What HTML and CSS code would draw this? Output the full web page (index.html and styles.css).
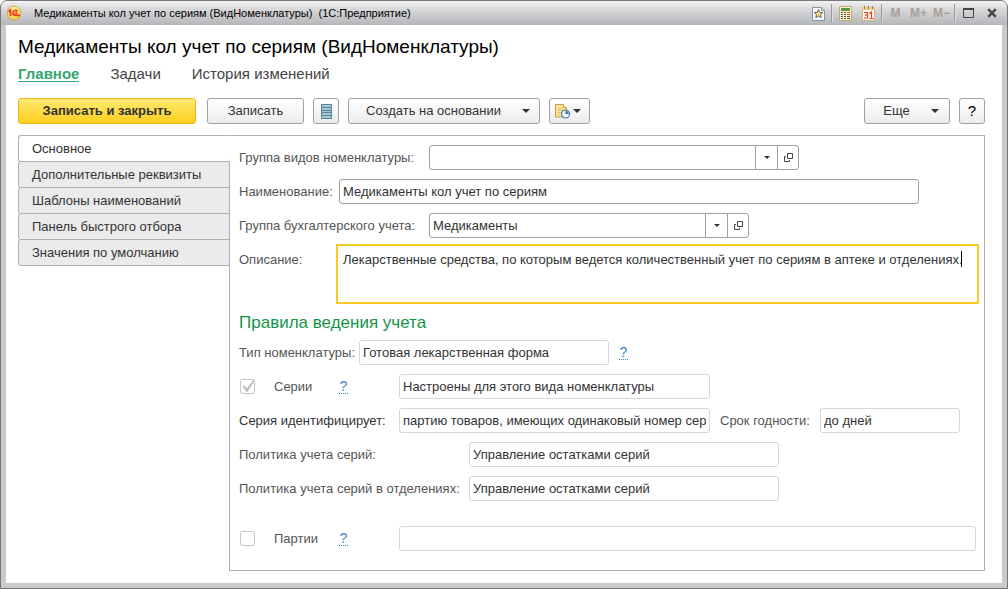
FILE: index.html
```html
<!DOCTYPE html>
<html lang="ru">
<head>
<meta charset="utf-8">
<title>Медикаменты кол учет по сериям (ВидНоменклатуры)</title>
<link rel="stylesheet" href="styles.css">
</head>
<body>
<div class="window">
  <header class="titlebar">
    <svg class="logo" width="16" height="16" viewBox="0 0 16 16" aria-hidden="true">
      <defs><linearGradient id="gold" x1="0" y1="0" x2="0" y2="1"><stop offset="0" stop-color="#fff0a0"/><stop offset="1" stop-color="#f5cd45"/></linearGradient></defs>
      <circle cx="8" cy="8" r="7" fill="url(#gold)" stroke="#d2a24a"/>
      <path d="M2.500 6.500 4.500 5v6M11.500 6.200C10.500 4.800 7 5 7 8c0 2 1.500 2.300 3 2.300H14M11.300 8.200H9.200" fill="none" stroke="#e33422" stroke-width="1.700"/>
    </svg>
    <span class="caption">Медикаменты кол учет по сериям (ВидНоменклатуры)&nbsp; (1С:Предприятие)</span>
    <div class="tools">
      <button class="tool" type="button" aria-label="Избранное">
        <svg width="13" height="15" viewBox="0 0 13 15"><path d="M.5 1.500h9l3 3v10H.5z" fill="#f6f9fc" stroke="#7f97aa"/><path d="M9.500 1.500v3h3" fill="#dce6ee" stroke="#7f97aa"/><path d="m6.500 3.500 1.200 2.800 3 .3-2.200 2 .7 3-2.700-1.600-2.700 1.600.7-3-2.200-2 3-.3z" fill="#ffd78a" stroke="#5d5346" stroke-width=".9"/></svg>
      </button>
      <i class="sep"></i>
      <button class="tool" type="button" aria-label="Калькулятор">
        <svg width="13" height="15" viewBox="0 0 13 15"><path d="M.5.5h12v14H.5z" fill="#fdf0cc" stroke="#c3ab77"/><path d="M2 2h9v3H2z" fill="#5c9448"/><path d="M2 6h2v1H2zm3 0h2v1H5zM2 8h2v1H2zm3 0h2v1H5zm-3 2h2v1H2zm3 0h2v1H5zm-3 2h2v1H2zm3 0h2v1H5zm3-2h3v1H8zm0 2h3v1H8z" fill="#4f5845"/><path d="M8 6h3v1H8zm0 2h3v1H8z" fill="#e05435"/></svg>
      </button>
      <button class="tool" type="button" aria-label="Календарь">
        <svg width="13" height="15" viewBox="0 0 13 15"><path d="M.5 1.500h12v13H.5z" fill="#fdf6ec" stroke="#d3b47a"/><path d="M0 1h13v3H0z" fill="#eccb85"/><path d="M2 0h1v3H2zm4 0h1v3H6zm4 0h1v3h-1z" fill="#9e7a39"/><path d="M2 6.500h3.500v5.500H2M3 9.200h2.500M7.500 7.500l2-1.500v6M7.500 12.500h4" fill="none" stroke="#ee4423" stroke-width="1.200"/></svg>
      </button>
      <i class="sep"></i>
      <button class="tool mem" type="button">M</button>
      <button class="tool mem" type="button">M+</button>
      <button class="tool mem" type="button">M−</button>
      <i class="sep"></i>
      <button class="tool" type="button" aria-label="Развернуть">
        <svg width="11" height="10" viewBox="0 0 11 10"><path d="M.5.5h10v9H.5z" fill="none" stroke="#444"/><path d="M0 0h11v2H0z" fill="#444"/></svg>
      </button>
      <button class="tool" type="button" aria-label="Закрыть">
        <svg width="10" height="10" viewBox="0 0 10 10"><path d="m1.200 1.200 7.600 7.600M8.800 1.200 1.200 8.800" stroke="#444" stroke-width="2.400"/></svg>
      </button>
    </div>
  </header>

  <main class="content">
    <h1 class="title">Медикаменты кол учет по сериям (ВидНоменклатуры)</h1>
    <nav class="nav">
      <a class="nav-link active" href="#">Главное</a>
      <a class="nav-link" href="#">Задачи</a>
      <a class="nav-link" href="#">История изменений</a>
    </nav>

    <div class="toolbar">
      <button class="btn btn-primary" type="button">Записать и закрыть</button>
      <button class="btn btn-save" type="button">Записать</button>
      <button class="btn btn-icon" type="button" aria-label="Список">
        <svg width="11" height="15" viewBox="0 0 11 15"><path d="M0 0h11v15H0z" fill="#5f8798"/><path d="M1 1h9v2H1zm0 3h9v2H1zm0 3h9v1H1zm0 2h9v2H1zm0 3h9v2H1z" fill="#a5c7d3"/></svg>
      </button>
      <button class="btn btn-create" type="button"><span>Создать на основании</span><i class="caret"></i></button>
      <button class="btn btn-report" type="button" aria-label="Отчеты">
        <svg width="16" height="15" viewBox="0 0 16 15"><path d="M.5.5h8l3 3v9.500H.5z" fill="#ffe69a" stroke="#c29e4b"/><path d="M8.500.5v3h3" fill="#fff5d0" stroke="#c29e4b"/><path d="M2.500 4.500h5m-5 2h6m-6 2h3m-3 2h2" stroke="#dfbd68"/><circle cx="10.500" cy="10" r="4" fill="#f4f9ff" stroke="#3e78ae" stroke-width="1.200"/><path d="M10.500 10V6.800a3.200 3.200 0 0 1 3.200 3.200z" fill="#3e78ae"/></svg>
        <i class="caret"></i>
      </button>
      <button class="btn btn-more" type="button"><span>Еще</span><i class="caret"></i></button>
      <button class="btn btn-icon btn-help" type="button">?</button>
    </div>

    <div class="body">
      <div class="tabs" role="tablist">
        <button class="tab selected" type="button" role="tab" aria-selected="true">Основное</button>
        <button class="tab" type="button" role="tab">Дополнительные реквизиты</button>
        <button class="tab" type="button" role="tab">Шаблоны наименований</button>
        <button class="tab" type="button" role="tab">Панель быстрого отбора</button>
        <button class="tab" type="button" role="tab">Значения по умолчанию</button>
      </div>

      <form class="panel">
        <div class="row">
          <label class="label w-190" for="group">Группа видов номенклатуры:</label>
          <div class="combo w-370">
            <input class="combo-input" id="group" type="text">
            <button class="combo-btn" type="button" aria-label="Выбрать"><i class="caret small"></i></button>
            <button class="combo-btn open" type="button" aria-label="Открыть"><svg width="9" height="9" viewBox="0 0 9 9"><path d="M3.500.5h5v5h-5zM2 3.500H.5v5h5V7" fill="none" stroke="#444"/></svg></button>
          </div>
        </div>
        <div class="row">
          <label class="label w-100" for="name">Наименование:</label>
          <input class="field w-580" id="name" type="text" value="Медикаменты кол учет по сериям">
        </div>
        <div class="row">
          <label class="label w-190" for="account">Группа бухгалтерского учета:</label>
          <div class="combo w-320">
            <input class="combo-input" id="account" type="text" value="Медикаменты">
            <button class="combo-btn" type="button" aria-label="Выбрать"><i class="caret small"></i></button>
            <button class="combo-btn open" type="button" aria-label="Открыть"><svg width="9" height="9" viewBox="0 0 9 9"><path d="M3.500.5h5v5h-5zM2 3.500H.5v5h5V7" fill="none" stroke="#444"/></svg></button>
          </div>
        </div>
        <div class="row row-area">
          <label class="label" for="desc">Описание:</label>
          <div class="area-wrap">
            <textarea class="area" id="desc">Лекарственные средства, по которым ведется количественный учет по сериям в аптеке и отделениях.</textarea>
            <i class="cursor"></i>
          </div>
        </div>

        <h2 class="section">Правила ведения учета</h2>

        <div class="row">
          <label class="label w-120" for="type">Тип номенклатуры:</label>
          <input class="field ro w-250" id="type" type="text" readonly value="Готовая лекарственная форма">
          <a class="hint" href="#">?</a>
        </div>
        <div class="row">
          <div class="check-group">
            <input class="check" id="series" type="checkbox" checked disabled>
            <label class="check-label" for="series">Серии</label>
            <a class="hint" href="#">?</a>
          </div>
          <input class="field ro w-311" type="text" readonly aria-label="Настройка серий" value="Настроены для этого вида номенклатуры">
        </div>
        <div class="row">
          <label class="label dark w-160" for="ident">Серия идентифицирует:</label>
          <input class="field ro w-311" id="ident" type="text" readonly value="партию товаров, имеющих одинаковый номер серии">
          <label class="label w-100 label-next" for="expiry">Срок годности:</label>
          <input class="field ro w-140" id="expiry" type="text" readonly value="до дней">
        </div>
        <div class="row">
          <label class="label w-230" for="policy">Политика учета серий:</label>
          <input class="field ro w-310" id="policy" type="text" readonly value="Управление остатками серий">
        </div>
        <div class="row">
          <label class="label w-230" for="policy-dep">Политика учета серий в отделениях:</label>
          <input class="field ro w-310" id="policy-dep" type="text" readonly value="Управление остатками серий">
        </div>
        <div class="row row-batches">
          <div class="check-group">
            <input class="check" id="batches" type="checkbox" disabled>
            <label class="check-label" for="batches">Партии</label>
            <a class="hint" href="#">?</a>
          </div>
          <input class="field ro grow" type="text" readonly aria-label="Настройка партий">
        </div>
      </form>
    </div>
  </main>
</div>
</body>
</html>
```
FILE: styles.css
```css
* { box-sizing: border-box; }

body {
  margin: 0;
  background: #fff;
  color: #333;
  font: 13px/16px "Liberation Sans", Arial, sans-serif;
}

button, input, textarea {
  margin: 0;
  color: inherit;
  font: inherit;
}

.window {
  display: flex;
  flex-direction: column;
  min-height: 100vh;
  padding: 0 5px 5px;
  border: 1px solid #77777a;
  border-radius: 7px 7px 0 0;
  background: #c9cacc;
}

/* Title bar */
.titlebar {
  display: flex;
  align-items: center;
  height: 24px;
  margin: 0 -5px;
  padding: 0 4px 0 5px;
  border-radius: 6px 6px 0 0;
  background: linear-gradient(#f2f2f3, #d8d8da 35%, #b5b6b9);
}

.caption {
  flex: 1;
  margin-left: 12px;
  overflow: hidden;
  color: #000;
  font-size: 11px;
  white-space: nowrap;
}

.tools { display: flex; align-items: center; }

.tool {
  display: flex;
  align-items: center;
  justify-content: center;
  width: 23px;
  height: 20px;
  padding: 0;
  border: 0;
  background: none;
}

.mem { color: #a89f98; font-size: 12px; font-weight: bold; }

.sep {
  width: 2px;
  height: 18px;
  margin: 0 1px;
  border-left: 1px solid #98999b;
  border-right: 1px solid #dedede;
}

/* Page head */
.content {
  flex: 1;
  padding: 12px 17px 12px 12px;
  background: #fff;
}

.title {
  margin: 0;
  color: #000;
  font-size: 19px;
  font-weight: normal;
  line-height: 20px;
}

.nav {
  display: flex;
  gap: 31px;
  margin-top: 8px;
  font-size: 15px;
  line-height: 18px;
}

.nav-link { color: #444; text-decoration: none; }

.nav-link.active {
  height: 17px;
  border-bottom: 1px solid #35a873;
  color: #35a873;
  font-weight: bold;
}

/* Command bar */
.toolbar { display: flex; gap: 9px; margin-top: 15px; }

.btn {
  display: flex;
  align-items: center;
  justify-content: center;
  height: 26px;
  padding: 0;
  border: 1px solid #a0a0a0;
  border-radius: 3px;
  background: linear-gradient(#fff, #ececec);
  white-space: nowrap;
}

.btn-primary {
  width: 178px;
  margin-right: 2px;
  border-color: #e8b51a;
  background: linear-gradient(#ffe970, #fccf1e);
  font-weight: bold;
}

.btn-save { width: 97px; }
.btn-icon { width: 26px; }
.btn-create { gap: 21px; width: 192px; padding-left: 8px; }
.btn-report { gap: 2px; width: 41px; padding-right: 4px; }
.btn-more { gap: 21px; width: 86px; margin-left: auto; padding-left: 8px; }
.btn-help { color: #000; font-size: 15px; }

.caret {
  border: 4px solid transparent;
  border-top-color: #333;
  border-bottom-width: 0;
}

.caret.small { border-width: 3px 3px 0; }

/* Tabs and panel */
.body { display: flex; align-items: flex-start; margin-top: 11px; }

.tabs {
  position: relative;
  display: flex;
  flex: 0 0 212px;
  flex-direction: column;
  margin-right: -1px;
}

.tab {
  height: 27px;
  margin-bottom: -1px;
  padding: 0 13px;
  border: 1px solid #b0b0b0;
  border-radius: 3px 0 0 3px;
  background: #ebebeb;
  text-align: left;
}

.tab.selected { border-right-color: #fff; background: #fff; }

.panel {
  flex: 1;
  min-width: 0;
  padding: 9px 8px 19px 9px;
  border: 1px solid #b0b0b0;
}

/* Form rows */
.row { display: flex; align-items: center; margin-bottom: 9px; }

.label { flex: none; color: #555; white-space: nowrap; }
.label.dark { color: #333; }
.label-next { margin-left: 10px; }

.w-100 { width: 100px; }
.w-120 { width: 120px; }
.w-140 { width: 140px; }
.w-160 { width: 160px; }
.w-190 { width: 190px; }
.w-230 { width: 230px; }
.w-250 { width: 250px; }
.w-310 { width: 310px; }
.w-311 { width: 311px; }
.w-320 { width: 320px; }
.w-370 { width: 370px; }
.w-580 { width: 580px; }
.grow { flex: 1; }

.field, .combo {
  min-width: 0;
  height: 25px;
  border: 1px solid #a0a0a0;
  border-radius: 3px;
  background: #fff;
}

.field { padding: 0 3px; }
.field.ro { border-color: #d6d6d6; }

.combo { display: flex; }

.combo-input {
  flex: 1;
  min-width: 0;
  padding: 0 3px;
  border: 0;
  background: none;
}

.combo-btn {
  display: flex;
  align-items: center;
  justify-content: center;
  width: 22px;
  padding: 0;
  border: 0;
  border-left: 1px solid #a0a0a0;
  background: none;
}

.combo-btn.open { width: 21px; }

.row-area {
  align-items: flex-start;
  justify-content: space-between;
  margin: -3px -3px 9px 0;
}

.row-area .label { padding-top: 8px; }

.area-wrap { position: relative; flex: 0 0 643px; }

.area {
  display: block;
  width: 100%;
  height: 60px;
  padding: 6px 5px;
  border: 2px solid #fbc91f;
  outline: 0;
  background: #fff;
  resize: none;
}

.cursor {
  position: absolute;
  top: 7px;
  right: 17px;
  width: 1px;
  height: 16px;
  background: #000;
}

.section {
  margin: 0 0 7px;
  color: #149447;
  font-size: 17px;
  font-weight: normal;
  line-height: 20px;
}

.check-group { display: flex; align-items: center; width: 160px; }

.check {
  display: grid;
  width: 15px;
  height: 15px;
  margin-left: 1px;
  border: 1px solid #c8c8c8;
  border-radius: 2px;
  background: #fff;
  appearance: none;
  place-content: center;
}

.check:checked::before {
  width: 13px;
  height: 13px;
  background: #c0c0c0;
  clip-path: polygon(10% 45%, 28% 45%, 44% 66%, 98% -6%, 112% -6%, 50% 92%, 40% 92%);
  content: "";
}

.check-label { width: 55px; margin-left: 19px; color: #555; }

.hint {
  width: 9px;
  margin-left: 10px;
  border-bottom: 1px dotted #3b86c6;
  color: #3b86c6;
  font-size: 14px;
  line-height: 14px;
  text-align: center;
  text-decoration: none;
}

.row-batches { margin: 25px 0 0; }
```
